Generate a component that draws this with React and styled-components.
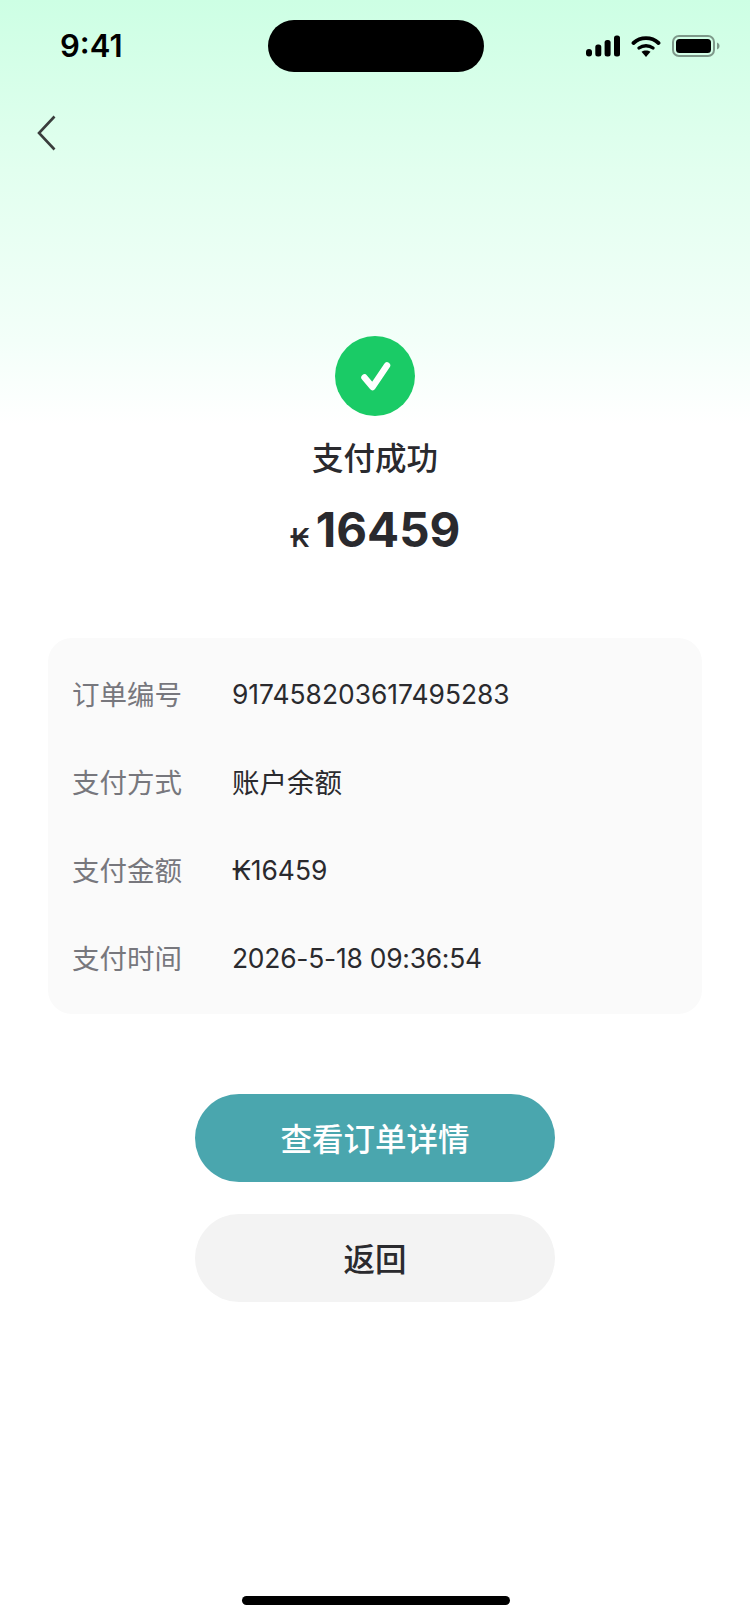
import React from "react";
import styled, { createGlobalStyle } from "styled-components";

const Global = createGlobalStyle`
  html, body { margin: 0; padding: 0; background: #fff; }
  * { box-sizing: border-box; }
  body { font-family: Inter, "Noto Sans CJK SC", sans-serif; }
`;

const Page = styled.div`
  position: relative;
  width: 750px;
  height: 1624px;
  overflow: hidden;
  display: flex;
  flex-direction: column;
  background: linear-gradient(180deg, #cdffe4 0%, #e2ffef 170px, #f3fff9 340px, #ffffff 425px);
`;

const StatusBar = styled.div`
  display: grid;
  grid-template-columns: 268px 216px 1fr;
  align-items: center;
  height: 52px;
  margin-top: 20px;
`;

const Time = styled.div`
  padding-left: 60px;
  font-size: 31px;
  font-weight: 600;
  color: #000;
  line-height: 50px;
`;

const Island = styled.div`
  height: 52px;
  background: #000;
  border-radius: 26px;
`;

const StatusIcons = styled.div`
  display: flex;
  align-items: center;
  gap: 11px;
  padding-left: 102px;
`;

const BackButton = styled.div`
  display: flex;
  margin: 43px 0 0 37px;
  width: 20px;
  height: 36px;
`;

const Result = styled.div`
  display: flex;
  flex-direction: column;
  align-items: center;
  margin-top: 185px;
`;

const SuccessBadge = styled.div`
  width: 80px;
  height: 80px;
  border-radius: 50%;
  background: #1acb66;
  display: flex;
  align-items: center;
  justify-content: center;
`;

const Title = styled.div`
  margin-top: 21px;
  font-size: 31.5px;
  font-weight: 500;
  line-height: 44px;
  color: #2a2a2e;
`;

const Amount = styled.div`
  display: flex;
  align-items: baseline;
  gap: 6px;
  margin-top: 18px;
  height: 62px;
  line-height: 62px;
  color: #2a2a2e;
`;

const Currency = styled.span`
  font-size: 26px;
  font-weight: 600;
`;

const AmountValue = styled.span`
  font-size: 47.5px;
  font-weight: 700;
`;

const InfoCard = styled.div`
  margin: 77px 48px 0;
  height: 376px;
  padding: 12px 24px;
  background: #fafafa;
  border-radius: 24px;
  display: grid;
  grid-auto-rows: 88px;
`;

const InfoRow = styled.div`
  display: flex;
  align-items: center;
  font-size: 27.5px;
`;

const InfoLabel = styled.div`
  width: 160px;
  padding-bottom: 3px;
  color: #77777d;
`;

const InfoValue = styled.div`
  color: #2a2a2e;
  padding-bottom: ${(p) => (p.$cjk ? "3px" : "0")};
  font-size: ${(p) => (p.$cjk ? "27.5px" : "26.4px")};
  letter-spacing: ${(p) => (p.$tight ? "-0.23px" : "0")};
`;

const Actions = styled.div`
  display: flex;
  flex-direction: column;
  align-items: center;
  gap: 32px;
  margin-top: 80px;
`;

const ActionButton = styled.div`
  width: 360px;
  height: 88px;
  padding-bottom: 3px;
  border-radius: 44px;
  display: flex;
  align-items: center;
  justify-content: center;
  font-size: 31.5px;
  font-weight: 500;
  background: ${(p) => (p.$primary ? "#4aa6ae" : "#f3f3f3")};
  color: ${(p) => (p.$primary ? "#ffffff" : "#2a2a2e")};
`;

const HomeIndicator = styled.div`
  position: absolute;
  left: 242px;
  bottom: 19px;
  width: 268px;
  height: 9px;
  border-radius: 5px;
  background: #000;
`;

const rows = [
  { label: "订单编号", value: "917458203617495283" },
  { label: "支付方式", value: "账户余额", cjk: true },
  { label: "支付金额", value: "₭16459" },
  { label: "支付时间", value: "2026-5-18 09:36:54", tight: true },
];

export default function App() {
  return (
    <Page>
      <Global />
      <StatusBar>
        <Time>9:41</Time>
        <Island />
        <StatusIcons>
          <svg width="34" height="22" viewBox="0 0 34 22">
            <rect x="0" y="14" width="6" height="7.5" rx="3" fill="#000" />
            <rect x="9.3" y="9.5" width="6" height="12" rx="2.5" fill="#000" />
            <rect x="18.6" y="5" width="6" height="16.5" rx="2.5" fill="#000" />
            <rect x="28" y="0.5" width="6" height="21" rx="2.5" fill="#000" />
          </svg>
          <svg width="30" height="22" viewBox="0 0 30 22">
            <path d="M2.5 8 C9.5 1.5 20.5 1.5 27.5 8" fill="none" stroke="#000" strokeWidth="3.8" strokeLinecap="round" />
            <path d="M8 13 C12 10 18 10 22 13" fill="none" stroke="#000" strokeWidth="3.4" strokeLinecap="round" />
            <path d="M10.5 16.8 C13 15 17 15 19.5 16.8 L15 22 Z" fill="#000" />
          </svg>
          <svg width="48" height="22" viewBox="0 0 48 22">
            <rect x="1" y="1" width="41" height="20" rx="6" fill="none" stroke="#000" strokeOpacity="0.4" strokeWidth="2" />
            <rect x="4" y="4" width="35" height="14" rx="3.5" fill="#000" />
            <path d="M45 7.5 C47 8.5 47.5 9.5 47.5 11 C47.5 12.5 47 13.5 45 14.5 Z" fill="#000" fillOpacity="0.4" />
          </svg>
        </StatusIcons>
      </StatusBar>
      <BackButton>
        <svg width="20" height="36" viewBox="0 0 20 36">
          <path d="M17.5 1.5 L2 18 L17.5 34.5" fill="none" stroke="#3a3d3c" strokeWidth="2.6" />
        </svg>
      </BackButton>
      <Result>
        <SuccessBadge>
          <svg width="32" height="32" viewBox="0 0 32 32">
            <path d="M5.5 17.5 L13.5 27 L28 5.5" fill="none" stroke="#fff" strokeWidth="6.5" strokeLinecap="round" strokeLinejoin="round" />
          </svg>
        </SuccessBadge>
        <Title>支付成功</Title>
        <Amount>
          <Currency>₭</Currency>
          <AmountValue>16459</AmountValue>
        </Amount>
      </Result>
      <InfoCard>
        {rows.map((row) => (
          <InfoRow key={row.label}>
            <InfoLabel>{row.label}</InfoLabel>
            <InfoValue $cjk={row.cjk} $tight={row.tight}>{row.value}</InfoValue>
          </InfoRow>
        ))}
      </InfoCard>
      <Actions>
        <ActionButton $primary>查看订单详情</ActionButton>
        <ActionButton>返回</ActionButton>
      </Actions>
      <HomeIndicator />
    </Page>
  );
}
